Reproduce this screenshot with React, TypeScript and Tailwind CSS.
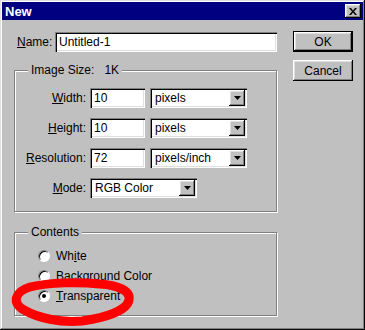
import { ReactNode } from 'react';

const raised = 'shadow-[inset_-1px_-1px_#000,inset_1px_1px_#fff,inset_-2px_-2px_#808080,inset_2px_2px_#dfdfdf]';
const sunken = 'shadow-[inset_1px_1px_#808080,inset_2px_2px_#000,inset_-1px_-1px_#fff,inset_-2px_-2px_#dfdfdf]';

function Field({ value, width }: { value: string; width: string }) {
  return (
    <div className={`h-[20px] ${width} bg-white ${sunken} flex items-center pl-[4px] leading-none`}>
      {value}
    </div>
  );
}

function Select({ value, width }: { value: string; width: string }) {
  return (
    <div className={`h-[20px] ${width} bg-white ${sunken} flex items-center justify-between pl-[5px] leading-none`}>
      <span>{value}</span>
      <span className={`w-[16px] h-[16px] mr-[2px] bg-[#c0c0c0] ${raised} flex items-center justify-center`}>
        <svg width="7" height="4" viewBox="0 0 7 4">
          <path d="M0 0h7L3.5 4z" fill="#000" />
        </svg>
      </span>
    </div>
  );
}

function Row({ label, children }: { label: ReactNode; children: ReactNode }) {
  return (
    <div className="flex items-center h-[20px]">
      <span className="w-[71px] text-right">{label}</span>
      <div className="ml-[4px] flex gap-[5px]">{children}</div>
    </div>
  );
}

function Radio({ label, checked = false }: { label: ReactNode; checked?: boolean }) {
  return (
    <div className="flex items-center h-[20px]">
      <span className="w-[12px] h-[12px] rounded-full bg-white border border-t-[#808080] border-l-[#808080] border-b-white border-r-white shadow-[inset_1px_1px_0_#000] flex items-center justify-center">
        {checked && <span className="w-[4px] h-[4px] rounded-full bg-black" />}
      </span>
      <span className="ml-[6px]">{label}</span>
    </div>
  );
}

const groupBox = 'border border-[#808080] shadow-[inset_1px_1px_0_#fff,1px_1px_0_#fff]';

export default function App() {
  return (
    <div className="relative w-[365px] h-[330px] bg-[#c0c0c0] p-[2px] text-[12px] text-black font-['Liberation_Sans',Arial,sans-serif] shadow-[inset_-1px_-1px_#0a0a0a,inset_1px_1px_#dfdfdf,inset_-2px_-2px_#808080,inset_2px_2px_#fff] overflow-hidden">
      <div className="h-[18px] bg-[#000080] flex items-center justify-between pl-[3px] pr-[2px]">
        <span className="text-white font-bold text-[13px] leading-none">New</span>
        <button className={`w-[16px] h-[14px] bg-[#c0c0c0] ${raised} flex items-center justify-center`}>
          <svg width="8" height="7" viewBox="0 0 8 7">
            <path d="M0 0h2l2 2.5L6 0h2L5 3.5 8 7H6L4 4.5 2 7H0l3-3.5z" fill="#000" />
          </svg>
        </button>
      </div>

      <div className="flex">
        <div className="w-[263px] ml-[12px]">
          <div className="flex items-center mt-[12px] pl-[3px]">
            <span className="w-[38px]"><u>N</u>ame:</span>
            <Field value="Untitled-1" width="w-[222px]" />
          </div>

          <fieldset className={`mt-[11px] ${groupBox} pt-[11px] pb-[13px]`}>
            <legend className="ml-[13px] px-[3px] leading-[14px] bg-[#c0c0c0]">
              Image Size:<span className="ml-[10px]">1K</span>
            </legend>
            <div className="flex flex-col gap-[10px]">
              <Row label={<><u>W</u>idth:</>}>
                <Field value="10" width="w-[55px]" />
                <Select value="pixels" width="w-[97px]" />
              </Row>
              <Row label={<><u>H</u>eight:</>}>
                <Field value="10" width="w-[55px]" />
                <Select value="pixels" width="w-[97px]" />
              </Row>
              <Row label={<><u>R</u>esolution:</>}>
                <Field value="72" width="w-[55px]" />
                <Select value="pixels/inch" width="w-[97px]" />
              </Row>
              <Row label={<><u>M</u>ode:</>}>
                <Select value="RGB Color" width="w-[107px]" />
              </Row>
            </div>
          </fieldset>

          <fieldset className={`mt-[13px] ${groupBox} pt-[7px] pb-[9px] pl-[23px]`}>
            <legend className="-ml-[10px] px-[3px] leading-[14px] bg-[#c0c0c0]">Contents</legend>
            <Radio label={<>Wh<u>i</u>te</>} />
            <Radio label={<><u>B</u>ackground Color</>} />
            <Radio label={<><u>T</u>ransparent</>} checked />
          </fieldset>
        </div>

        <div className="ml-[16px] mt-[11px] flex flex-col gap-[8px]">
          <div className="w-[60px] h-[21px] border border-black">
            <button className={`w-full h-full bg-[#c0c0c0] ${raised} leading-none`}>OK</button>
          </div>
          <button className={`w-[60px] h-[21px] bg-[#c0c0c0] ${raised} leading-none`}>Cancel</button>
        </div>
      </div>

      <svg className="absolute inset-0 pointer-events-none" width="365" height="330" viewBox="0 0 365 330">
        <path
          d="M100 284 C116 285,131 290,129 300 C127 311,104 318,82 321 C60 323,38 318,24 310 C12 303,14 292,30 287 C50 282,80 282,100 284 Z"
          fill="none"
          stroke="#f00"
          strokeWidth="9"
          strokeLinejoin="round"
        />
      </svg>
    </div>
  );
}
